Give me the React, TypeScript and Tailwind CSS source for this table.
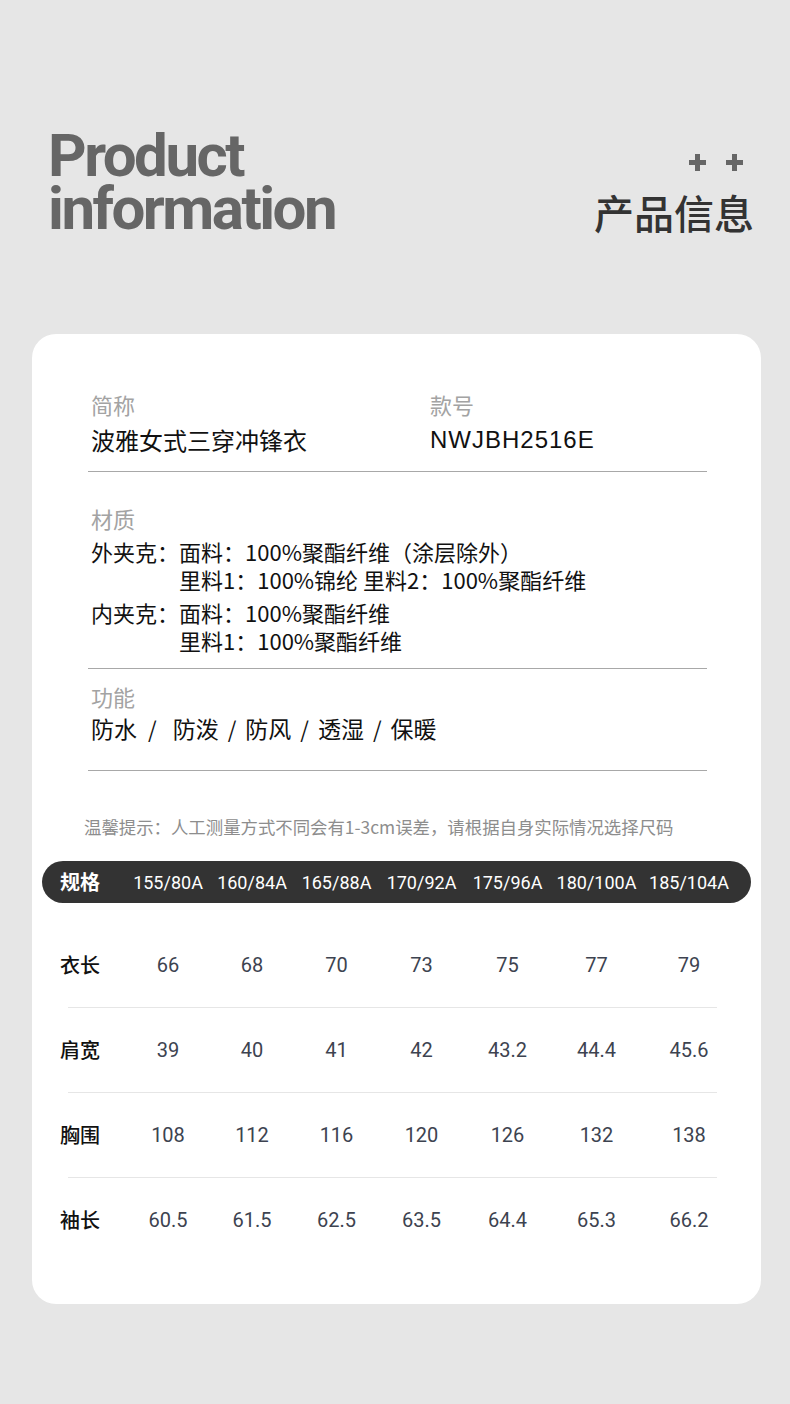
import React from "react";

const sizes = ["155/80A", "160/84A", "165/88A", "170/92A", "175/96A", "180/100A", "185/104A"];

const rows = [
  { label: "衣长", values: ["66", "68", "70", "73", "75", "77", "79"] },
  { label: "肩宽", values: ["39", "40", "41", "42", "43.2", "44.4", "45.6"] },
  { label: "胸围", values: ["108", "112", "116", "120", "126", "132", "138"] },
  { label: "袖长", values: ["60.5", "61.5", "62.5", "63.5", "64.4", "65.3", "66.2"] },
];

const features = ["防水", "防泼", "防风", "透湿", "保暖"];

const cjk = "font-['Noto_Sans_CJK_SC',sans-serif]";
const grid = "grid grid-cols-[66px_84px_84px_85px_85px_87px_91px_94px] items-center";

const Plus = () => (
  <svg width="17" height="17" viewBox="0 0 17 17">
    <rect x="6" y="0" width="5" height="17" fill="#666" />
    <rect x="0" y="6" width="17" height="5" fill="#666" />
  </svg>
);

export default function App() {
  return (
    <div className={`min-h-[1404px] w-[790px] bg-[#e6e6e6] pt-[129px] pb-[99px] ${cjk}`}>
      {/* Header */}
      <div className="flex justify-between pl-[48px] pr-[36px]">
        <div className="font-['Roboto',sans-serif] text-[60px] font-bold leading-[53px] tracking-[-2.5px] text-[#666]">
          <div>Product</div>
          <div>information</div>
        </div>
        <div className="flex flex-col items-end">
          <div className="mt-[25px] mr-[11px] flex gap-[20px]">
            <Plus />
            <Plus />
          </div>
          <div className="mt-[17px] text-[40px] font-medium leading-[48px] text-[#333]">产品信息</div>
        </div>
      </div>

      {/* Card */}
      <div className="ml-[32px] mr-[29px] mt-[98px] rounded-[24px] bg-white px-[10px] pt-[55px] pb-[42px]">
        <div className="pl-[46px] pr-[44px]">
          <div className="grid grid-cols-[339px_1fr] pl-[3px]">
            <div>
              <div className="text-[22px] leading-[30px] text-[#a3a3a3]">简称</div>
              <div className="mt-[5px] text-[24px] leading-[32px] text-[#111]">波雅女式三穿冲锋衣</div>
            </div>
            <div>
              <div className="text-[22px] leading-[30px] text-[#a3a3a3]">款号</div>
              <div className="mt-[5px] font-['Liberation_Sans',sans-serif] text-[24px] leading-[32px] tracking-[1px] text-[#111]">
                NWJBH2516E
              </div>
            </div>
          </div>
          <div className="mt-[15px] h-px bg-[#a8a8a8]" />

          <div className="pl-[3px]">
            <div className="mt-[31px] text-[22px] leading-[30px] text-[#a3a3a3]">材质</div>
            <div className="mt-[4px] flex text-[22px] leading-[28px] text-[#111]">
              <span className="w-[88px] shrink-0">外夹克：</span>
              <div>
                <div>面料：100%聚酯纤维（涂层除外）</div>
                <div>里料1：100%锦纶 里料2：100%聚酯纤维</div>
              </div>
            </div>
            <div className="mt-[5px] flex text-[22px] leading-[28px] text-[#111]">
              <span className="w-[88px] shrink-0">内夹克：</span>
              <div>
                <div>面料：100%聚酯纤维</div>
                <div>里料1：100%聚酯纤维</div>
              </div>
            </div>
          </div>
          <div className="mt-[14px] h-px bg-[#a8a8a8]" />

          <div className="pl-[3px]">
            <div className="mt-[12px] text-[22px] leading-[30px] text-[#a3a3a3]">功能</div>
            <div className="mt-[1px] flex items-center text-[23px] leading-[32px] text-[#111]">
              {features.map((f, i) => (
                <React.Fragment key={f}>
                  {i > 0 && (
                    <span className={`text-[22px] ${i === 1 ? "ml-[11px] mr-[16px]" : "ml-[9px] mr-[9px]"}`}>/</span>
                  )}
                  <span>{f}</span>
                </React.Fragment>
              ))}
            </div>
          </div>
          <div className="mt-[26px] h-px bg-[#a8a8a8]" />
        </div>

        <div className="mt-[44px] pl-[42px] text-[17.4px] leading-[24px] whitespace-nowrap text-[#8d8d8d]">
          温馨提示：人工测量方式不同会有1-3cm误差，请根据自身实际情况选择尺码
        </div>

        {/* Size bar */}
        <div className={`mt-[22px] h-[42px] rounded-full bg-[#333] pl-[18px] ${grid}`}>
          <div className="text-[20px] font-bold text-white">规格</div>
          {sizes.map((s) => (
            <div key={s} className="text-center font-['Roboto',sans-serif] text-[18px] text-white">
              {s}
            </div>
          ))}
        </div>

        {/* Rows */}
        <div className="mt-[20px]">
          {rows.map((r, i) => (
            <div key={r.label}>
              {i > 0 && <div className="ml-[26px] mr-[34px] h-px bg-[#e6e6e6]" />}
              <div className={`h-[84px] pl-[18px] ${grid}`}>
                <div className="text-[20px] font-medium text-[#111]">{r.label}</div>
                {r.values.map((v, j) => (
                  <div key={j} className="text-center font-['Roboto',sans-serif] text-[20px] text-[#3d4350]">
                    {v}
                  </div>
                ))}
              </div>
            </div>
          ))}
        </div>
      </div>
    </div>
  );
}
